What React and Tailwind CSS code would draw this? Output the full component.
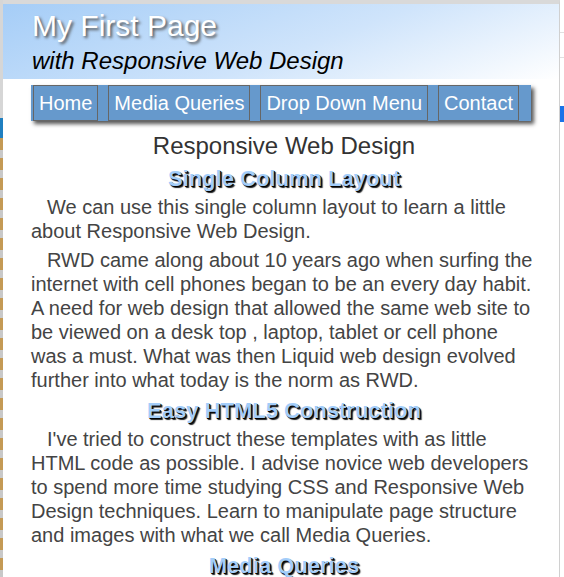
import React from 'react'

const nav = ["Home", "Media Queries", "Drop Down Menu", "Contact"]

function Heading({ children }) {
    return (
        <h3 className="mt-[4px] mb-[2px] text-center text-[22px] leading-[28px] font-bold text-[#a3cdf9] [text-shadow:1px_1px_0_#000,2px_2px_1px_#222]">
            {children}
        </h3>
    )
}

function Para({ children }) {
    return (
        <p className="indent-4 text-[20px] leading-[24px] text-[#444] mb-[5px]">{children}</p>
    )
}

export default function App() {
    return (
        <div className="w-[564px] h-[577px] overflow-hidden flex bg-white font-['Liberation_Sans',Arial,sans-serif]">
            {/* left clutter strip */}
            <div className="w-[3px] shrink-0 flex flex-col bg-[#c8c8c8]">
                <div className="h-[118px] bg-[#d6d6d6]"></div>
                <div className="h-[20px] bg-[#1f7fc0]"></div>
                <div className="flex-1 bg-[repeating-linear-gradient(180deg,#c49a55_0_12px,#c8c8c8_12px_20px)]"></div>
            </div>

            {/* page */}
            <div className="w-[557px] shrink-0 border-t-4 border-[#d9d9d9] border-r border-r-[#d0d0d0] flex flex-col">
                {/* header */}
                <header className="h-[77px] pl-[29px] pt-[5px] bg-[linear-gradient(160deg,#a5cdf7_0%,#cfe4fb_55%,#ffffff_100%)]">
                    <h1 className="text-[30px] leading-[34px] text-white [text-shadow:2px_2px_3px_#555]">My First Page</h1>
                    <h2 className="text-[24px] leading-[36px] italic text-black">with Responsive Web Design</h2>
                </header>

                <div className="pl-[28px] pr-[20px]">
                    {/* nav */}
                    <nav className="mt-[6px] mr-[8px] h-[36px] flex gap-[10px] bg-[#6699cc] pl-[2px] shadow-[3px_3px_4px_#555]">
                        {nav.map((item) => (
                            <a key={item} className="h-full px-[5px] flex items-center border border-[#666] text-white text-[20px]">
                                {item}
                            </a>
                        ))}
                    </nav>

                    {/* content */}
                    <main className="pt-[10px] pr-[2px]">
                        <h2 className="text-center text-[24px] leading-[30px] text-[#333]">Responsive Web Design</h2>
                        <Heading>Single Column Layout</Heading>
                        <Para>We can use this single column layout to learn a little about Responsive Web Design.</Para>
                        <Para>RWD came along about 10 years ago when surfing the internet with cell phones began to be an every day habit. A need for web design that allowed the same web site to be viewed on a desk top , laptop, tablet or cell phone was a must. What was then Liquid web design evolved further into what today is the norm as RWD.</Para>
                        <Heading>Easy HTML5 Construction</Heading>
                        <Para>I've tried to construct these templates with as little HTML code as possible. I advise novice web developers to spend more time studying CSS and Responsive Web Design techniques. Learn to manipulate page structure and images with what we call Media Queries.</Para>
                        <Heading>Media Queries</Heading>
                    </main>
                </div>
            </div>

            {/* right clutter strip */}
            <div className="flex-1 flex flex-col bg-white">
                <div className="h-[33px] border-b border-[#e0e0e0]"></div>
                <div className="h-[25px] border-b border-[#e0e0e0]"></div>
                <div className="mt-[48px] h-[16px] bg-[#1a73e8]"></div>
            </div>
        </div>
    )
}
